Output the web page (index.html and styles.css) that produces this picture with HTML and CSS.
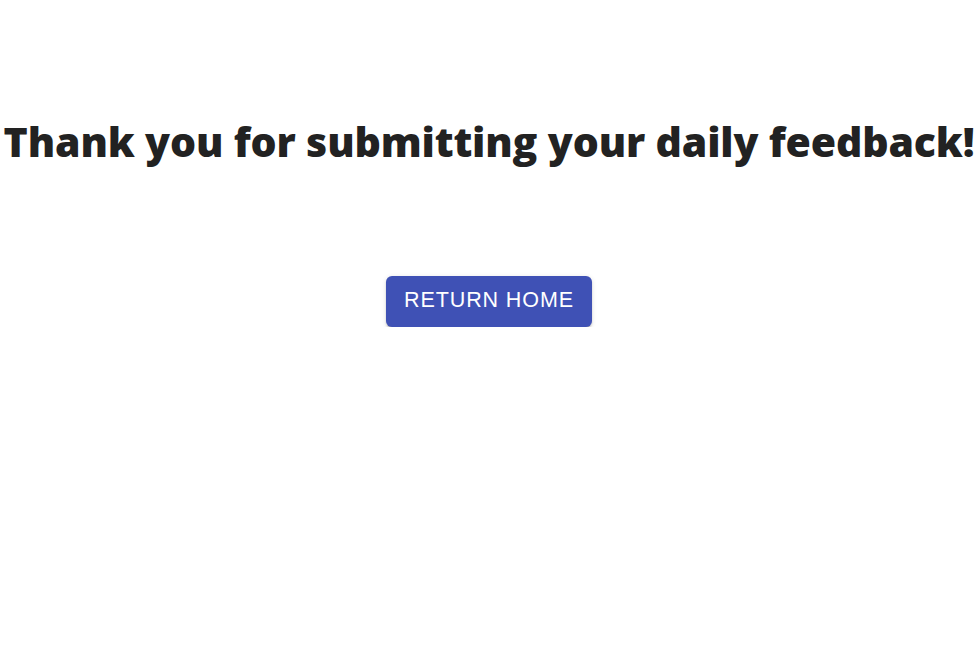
FILE: index.html
```html
<!DOCTYPE html>
<html>
<head>
<meta charset="utf-8">
<link rel="stylesheet" href="styles.css">
</head>
<body>
<main class="page">
  <h1 class="title">Thank you for submitting your daily feedback!</h1>
  <button class="btn">RETURN HOME</button>
</main>
</body>
</html>
```
FILE: styles.css
```css
html, body { margin: 0; padding: 0; background: #fff; }
.page {
  display: flex;
  flex-direction: column;
  align-items: center;
  padding-top: 116px;
}
.title {
  margin: 0;
  font-family: "Open Sans", "Lato", sans-serif;
  font-weight: 800;
  font-size: 41px;
  line-height: 50px;
  letter-spacing: -0.15px;
  font-variant-ligatures: none;
  color: #222;
  white-space: nowrap;
  text-align: center;
}
.btn {
  margin-top: 110px;
  width: 206px;
  height: 51px;
  padding: 0 0 2px;
  border: none;
  border-radius: 6px;
  background: #3f51b5;
  color: #fff;
  font-family: "Liberation Sans", Arial, sans-serif;
  font-size: 21.5px;
  letter-spacing: 0.9px;
  box-shadow: 0 3px 1px -2px rgba(0,0,0,0.2), 0 2px 2px 0 rgba(0,0,0,0.14), 0 1px 5px 0 rgba(0,0,0,0.12);
  cursor: pointer;
}
```
